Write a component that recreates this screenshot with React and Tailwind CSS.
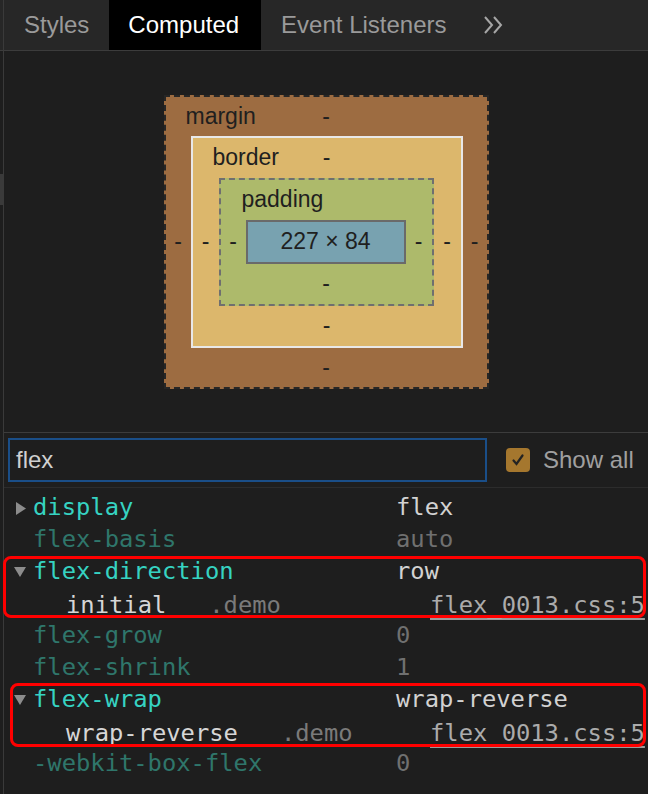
import React from 'react';

const RightTri = () => (
    <svg width="10" height="13" viewBox="0 0 10 13"><polygon points="0,0 10,6.5 0,13" fill="#8c8c8c" /></svg>
);
const DownTri = () => (
    <svg width="12" height="10" viewBox="0 0 12 10"><polygon points="0,0 12,0 6,10" fill="#8c8c8c" /></svg>
);

// one computed property line
const PropRow = ({ name, value, active, arrow }) => (
    <div className="flex h-8 items-center whitespace-nowrap font-['DejaVu_Sans_Mono',monospace] text-[23.8px]">
        <div className="flex w-[29px] justify-end pr-[7px]">{arrow === 'right' ? <RightTri /> : arrow === 'down' ? <DownTri /> : null}</div>
        <div className={`w-[363px] ${active ? 'text-[#36d3c2]' : 'text-[#2f766b]'}`}>{name}</div>
        <div className={active ? 'text-[#d2d2d2]' : 'text-[#707070]'}>{value}</div>
    </div>
);

const TraceRow = ({ value }) => (
    <div className="grid h-8 grid-cols-[426px_1fr] items-center overflow-hidden whitespace-nowrap font-['DejaVu_Sans_Mono',monospace] text-[23.8px]">
        <div className="flex pl-[62px]">
            <span className="text-[#d6d6d6]">{value}</span>
            <span className="ml-[43px] text-[#7a7a7a]">.demo</span>
        </div>
        <div className="text-[#ababab] underline decoration-[#9a9a9a] decoration-2 underline-offset-[5px]">flex_0013.css:5</div>
    </div>
);

const Dash = () => <span className="leading-none">-</span>;

export default function App() {
    return (
        <div className="flex h-[794px] w-[648px] overflow-hidden bg-[#1e1e1e] font-['Liberation_Sans',Arial,sans-serif]">
            {/* left splitter strip */}
            <div className="flex w-[3px] flex-col">
                <div className="h-[50px] bg-[#272727]"></div>
                <div className="h-px bg-[#3c3c3c]"></div>
                <div className="h-[123px]"></div>
                <div className="h-[31px] bg-[#3a3a3a]"></div>
                <div className="flex-1"></div>
            </div>

            <div className="flex flex-1 flex-col border-l border-[#3a3a3a]">
                {/* Tabs */}
                <div className="flex h-[51px] items-stretch border-b border-[#3c3c3c] bg-[#272727] text-[24px]">
                    <div className="flex items-center pl-[20px] pr-[20px] text-[#9a9a9a]">Styles</div>
                    <div className="flex items-center bg-black pl-[19px] pr-[22px] text-white">Computed</div>
                    <div className="flex items-center pl-[20px] pr-[18px] text-[#9a9a9a]">Event Listeners</div>
                    <div className="flex items-center pl-[18px]">
                        <svg width="22" height="20" viewBox="0 0 22 20" fill="none" stroke="#a6a6a6" strokeWidth="2" strokeLinejoin="miter">
                            <path d="M2 2l7 8-7 8" />
                            <path d="M11 2l7 8-7 8" />
                        </svg>
                    </div>
                </div>

                {/* Box model */}
                <div className="flex h-[381px] items-center justify-center text-[23px] text-[#1f1f1f]">
                    <div className="flex h-[294px] w-[325px] flex-col border-2 border-dashed border-[#262626] bg-[#9d6c41]">
                        <div className="relative flex h-[39px] items-center justify-center">
                            <span className="absolute left-[20px]">margin</span>
                            <Dash />
                        </div>
                        <div className="flex items-center">
                            <div className="flex w-[25px] justify-center"><Dash /></div>
                            <div className="flex h-[212px] w-[272px] flex-col border-2 border-[#e8e8e8] bg-[#dcb76c]">
                                <div className="relative flex h-[40px] items-center justify-center">
                                    <span className="absolute left-[20px]">border</span>
                                    <Dash />
                                </div>
                                <div className="flex items-center">
                                    <div className="flex w-[26px] justify-center"><Dash /></div>
                                    <div className="flex h-[128px] w-[215px] flex-col border-2 border-dashed border-[#6f6f6f] bg-[#adba6b]">
                                        <div className="relative flex h-[40px] items-center justify-center">
                                            <span className="absolute left-[21px]">padding</span>
                                        </div>
                                        <div className="flex items-center">
                                            <div className="flex w-[25px] justify-center"><Dash /></div>
                                            <div className="flex h-[44px] w-[160px] items-center justify-center border-2 border-[#6a6a6a] bg-[#78a2b0]">227 × 84</div>
                                            <div className="flex w-[26px] justify-center"><Dash /></div>
                                        </div>
                                        <div className="flex h-[40px] items-center justify-center"><Dash /></div>
                                    </div>
                                    <div className="flex w-[27px] justify-center"><Dash /></div>
                                </div>
                                <div className="flex h-[40px] items-center justify-center"><Dash /></div>
                            </div>
                            <div className="flex w-[24px] justify-center"><Dash /></div>
                        </div>
                        <div className="flex h-[39px] items-center justify-center"><Dash /></div>
                    </div>
                </div>

                {/* Filter */}
                <div className="flex h-[56px] items-start border-t border-[#3c3c3c] border-b border-b-[#2c2c2c] pt-[5px]">
                    <div className="ml-[4px] flex h-[44px] w-[479px] items-center border-2 border-[#1a4e88] pl-[6px] text-[24px] text-[#d0d0d0]">flex</div>
                    <div className="ml-[19px] mt-[4px] flex items-center">
                        <div className="flex h-[24px] w-[24px] items-center justify-center rounded-[4px] bg-[#a5772e]">
                            <svg width="16" height="16" viewBox="0 0 16 16" fill="none" stroke="#232323" strokeWidth="2.2" strokeLinecap="round">
                                <path d="M3.5 8.5l3 3.5 6-8.5" />
                            </svg>
                        </div>
                        <span className="ml-[13px] text-[24px] text-[#a0a0a0]">Show all</span>
                    </div>
                </div>

                {/* Computed properties */}
                <div className="relative pt-[4px]">
                    <PropRow name="display" value="flex" active arrow="right" />
                    <PropRow name="flex-basis" value="auto" />
                    <PropRow name="flex-direction" value="row" active arrow="down" />
                    <TraceRow value="initial" />
                    <PropRow name="flex-grow" value="0" />
                    <PropRow name="flex-shrink" value="1" />
                    <PropRow name="flex-wrap" value="wrap-reverse" active arrow="down" />
                    <TraceRow value="wrap-reverse" />
                    <PropRow name="-webkit-box-flex" value="0" />

                    {/* annotation highlights */}
                    <div className="absolute left-[-1px] top-[68px] h-[62px] w-[643px] rounded-[8px] border-[3px] border-[#ff0000]"></div>
                    <div className="absolute left-[6px] top-[195px] h-[64px] w-[636px] rounded-[8px] border-[3px] border-[#ff0000]"></div>
                </div>
            </div>
        </div>
    );
}
